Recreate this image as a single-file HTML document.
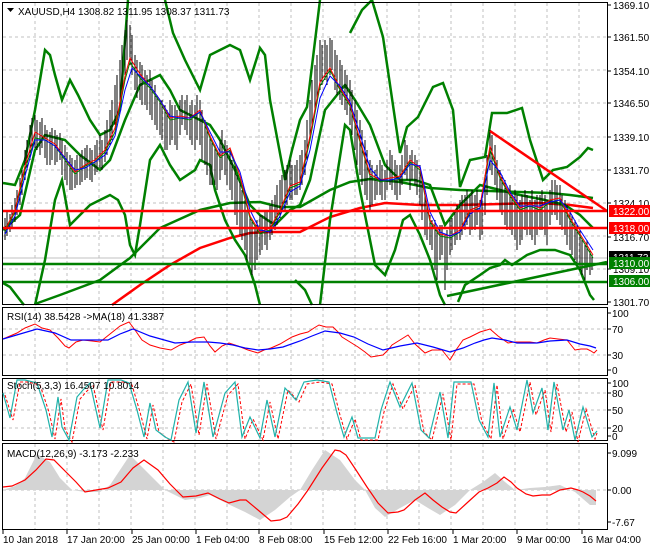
<!DOCTYPE html>
<html><head><meta charset="utf-8"><style>
html,body{margin:0;padding:0;background:#fff;width:650px;height:550px;overflow:hidden}
svg{display:block;font-family:"Liberation Sans",sans-serif;font-size:10px}
</style></head><body>
<svg width="650" height="550" viewBox="0 0 650 550" xmlns="http://www.w3.org/2000/svg">
<rect width="650" height="550" fill="#fff"/>
<g stroke="#c0c0c0" stroke-dasharray="3,3" stroke-width="1" fill="none">
<path d="M3 37H607M3 70H607M3 103H607M3 137H607M3 170H607M3 203H607M3 236H607M3 269H607"/>
<path d="M35 3V305M67 3V305M99 3V305M131 3V305M163 3V305M195 3V305M227 3V305M259 3V305M291 3V305M323 3V305M355 3V305M387 3V305M419 3V305M451 3V305M483 3V305M515 3V305M547 3V305M579 3V305"/>
<path d="M35 308V376M67 308V376M99 308V376M131 308V376M163 308V376M195 308V376M227 308V376M259 308V376M291 308V376M323 308V376M355 308V376M387 308V376M419 308V376M451 308V376M483 308V376M515 308V376M547 308V376M579 308V376"/>
<path d="M3 329H607M3 355H607"/>
<path d="M35 379V441M67 379V441M99 379V441M131 379V441M163 379V441M195 379V441M227 379V441M259 379V441M291 379V441M323 379V441M355 379V441M387 379V441M419 379V441M451 379V441M483 379V441M515 379V441M547 379V441M579 379V441"/>
<path d="M3 393H607M3 410H607M3 428H607"/>
<path d="M35 444V529M67 444V529M99 444V529M131 444V529M163 444V529M195 444V529M227 444V529M259 444V529M291 444V529M323 444V529M355 444V529M387 444V529M419 444V529M451 444V529M483 444V529M515 444V529M547 444V529M579 444V529"/>
<path d="M3 490H607"/>
</g>
<path d="M3 258H607" stroke="#c0c0c0"/>
<polyline fill="none" stroke="#f00" stroke-width="2.5" points="112,305 140,285 170,265 200,248 230,238 250,233 270,232 300,232 330,217 360,208 385,203 420,205 460,205 500,204 540,203 570,205 593,208"/>
<polyline fill="none" stroke="#008000" stroke-width="2.5" points="35,304 60,295 100,280 130,258 160,228 200,210 230,203 260,202 280,207 300,207 330,190 350,182 370,179 400,182 430,188 460,190 490,191 520,192 550,193 570,195 593,198"/>
<polyline fill="none" stroke="#008000" stroke-width="2.5" points="3,183 15,185 25,160 35,110 45,50 50,55 55,75 62,100 70,80 78,95 90,120 100,135 110,130 120,110 125,40 128,0"/>
<polyline fill="none" stroke="#008000" stroke-width="2.5" points="165,0 173,33 185,60 200,90 210,55 230,45 240,50 250,80 260,48 265,55 270,100 285,180 292,150 300,120 307,107 320,0"/>
<polyline fill="none" stroke="#008000" stroke-width="2.5" points="350,33 362,10 372,0"/>
<polyline fill="none" stroke="#008000" stroke-width="2.5" points="372,0 383,37 400,153 407,127 418,117 433,87 443,83 453,110 460,187 470,160 485,157 492,113 507,113 522,108 530,140 543,180 553,170 567,167 580,157 588,148 593,150"/>
<polyline fill="none" stroke="#008000" stroke-width="2.5" points="3,283 10,287 20,300 24,305"/>
<polyline fill="none" stroke="#008000" stroke-width="2.5" points="35,305 45,260 55,200 62,180 70,225 80,215 90,205 100,200 110,195 118,200 125,215 130,245 135,255 140,225 150,160 160,145 170,165 180,180 195,170 200,160 210,165 215,190 225,220 235,240 245,255 255,285 260,305"/>
<polyline fill="none" stroke="#008000" stroke-width="2.5" points="295,280 305,290 312,305"/>
<polyline fill="none" stroke="#008000" stroke-width="2.5" points="320,305 330,220 345,125 350,130 360,190 375,265 385,275 395,250 403,220 410,215 415,225 420,235 430,260 440,295 445,305"/>
<polyline fill="none" stroke="#008000" stroke-width="2.5" points="458,302 465,285 480,275 490,268 500,265 505,260 512,265 527,255 540,250 555,250 570,255 580,270 590,295 594,300"/>
<polyline fill="none" stroke="#008000" stroke-width="2.5" points="3,230 20,215 35,150 45,135 65,140 80,155 100,170 110,160 125,120 140,85 160,75 170,90 180,110 200,120 210,125 220,140 235,170 250,205 260,215 275,225 290,210 300,205 310,180 325,110 345,85 355,100 370,125 385,165 400,180 415,180 430,185 445,225 460,205 480,185 500,190 520,195 545,200 565,205 580,215 593,228"/>
<path stroke="#000" stroke-width="1" fill="none" d="M5 218V240M7 212V236M10 214V232M12 205V228M15 198V222M17 190V215M20 178V205M22 170V195M25 150V180M27 140V170M30 125V160M32 118V150M35 115V148M37 120V150M40 122V155M42 118V148M45 125V158M47 130V165M50 132V165M52 128V160M55 130V165M57 135V162M60 133V160M62 140V175M65 145V180M67 152V185M70 155V190M72 158V190M75 160V188M77 155V185M80 155V185M82 150V182M85 148V180M87 145V178M90 148V180M92 150V182M95 145V175M97 140V172M100 135V168M102 140V170M105 130V162M107 120V155M110 110V145M112 100V140M115 85V125M117 75V115M120 60V100M122 45V90M125 30V75M127 20V60M130 25V65M132 35V75M135 55V90M137 60V98M140 62V100M142 65V105M145 70V105M147 75V110M150 70V115M152 80V120M155 85V125M157 95V130M160 100V135M162 100V140M165 105V150M167 110V150M170 100V145M172 105V140M175 105V145M177 110V150M180 100V135M182 95V125M185 100V130M187 95V135M190 105V140M192 100V145M195 105V150M197 95V140M200 100V145M202 110V160M205 120V165M207 130V175M210 135V185M212 140V185M215 145V185M217 150V190M220 140V180M222 130V170M225 140V175M227 145V185M230 150V190M232 160V200M235 165V215M237 175V225M240 180V235M242 190V240M245 200V250M247 210V260M250 215V265M252 220V275M255 225V270M257 220V260M260 215V255M262 215V250M265 210V245M267 212V250M270 205V240M272 200V235M275 195V230M277 185V225M280 180V218M282 175V210M285 170V210M287 165V205M290 160V200M292 165V200M295 165V195M297 160V195M300 155V190M302 150V185M305 140V175M307 120V160M310 100V140M312 80V125M315 65V110M317 55V100M320 40V90M322 45V85M325 40V80M327 45V85M330 38V75M332 40V70M335 50V90M337 55V95M340 60V100M342 65V105M345 70V110M347 75V115M350 80V125M352 90V135M355 100V150M357 110V165M360 120V175M362 130V185M365 140V195M367 150V200M370 160V210M372 165V205M375 170V200M377 165V195M380 160V195M382 165V200M385 170V200M387 160V190M390 150V185M392 155V190M395 160V195M397 165V200M400 165V195M402 155V185M405 140V175M407 145V180M410 155V190M412 150V180M415 155V185M417 160V195M420 165V205M422 175V220M425 195V235M427 205V240M430 215V245M432 220V250M435 220V270M437 225V280M440 225V260M442 225V255M445 235V290M447 230V270M450 220V255M452 218V250M455 210V245M457 205V240M460 200V240M462 195V235M465 195V230M467 190V225M470 195V235M472 190V230M475 195V230M477 190V225M480 200V240M482 195V235M485 175V215M487 155V195M490 130V170M492 135V175M495 145V185M497 160V200M500 170V210M502 175V215M505 180V225M507 190V230M510 185V230M512 195V235M515 190V240M517 195V250M520 200V245M522 195V240M525 190V230M527 195V235M530 200V235M532 190V240M535 200V245M537 195V235M540 195V230M542 190V230M545 195V235M547 200V245M550 190V225M552 180V215M555 180V215M557 185V220M560 185V225M562 195V230M565 200V235M567 205V245M570 210V250M572 215V255M575 220V260M577 225V265M580 230V270M582 240V275M585 245V280M587 240V270M590 250V275M592 255V270"/>
<polyline fill="none" stroke="#008000" stroke-width="1" points="5,232 15,212 25,170 35,138 45,140 55,146 65,160 75,174 85,166 95,162 105,152 115,132 125,80 130,62 140,78 150,88 160,102 170,120 180,118 190,120 200,112 210,138 220,158 230,150 240,180 250,218 260,234 270,230 280,212 290,188 300,184 310,140 320,86 330,70 340,90 350,106 360,142 370,176 380,182 390,180 400,178 410,162 420,170 430,222 440,236 450,238 460,232 470,212 480,208 490,150 500,178 510,196 520,210 530,206 540,210 550,202 560,200 570,220 580,236 593,258"/>
<polyline fill="none" stroke="#f00" stroke-width="1" points="5,230 15,210 25,166 35,132 45,138 55,144 65,158 75,172 85,165 95,160 105,150 115,128 125,76 130,58 140,74 150,86 160,100 170,118 180,116 190,118 200,110 210,136 220,156 230,148 240,176 250,216 260,232 270,228 280,210 290,186 300,182 310,136 320,82 330,68 340,88 350,104 360,140 370,174 380,180 390,178 400,176 410,160 420,168 430,220 440,234 450,236 460,230 470,210 480,206 490,146 500,176 510,194 520,208 530,204 540,208 550,200 560,198 570,218 580,234 593,255"/>
<polyline fill="none" stroke="#00f" stroke-width="1" points="5,234 15,216 25,176 35,140 45,140 55,146 65,158 75,170 85,168 95,162 105,155 115,136 125,90 132,68 140,76 150,86 160,100 170,116 180,118 190,118 200,112 210,132 220,152 230,152 240,172 250,210 260,230 270,232 280,216 290,192 300,186 310,150 320,98 330,76 340,86 350,102 360,134 370,168 380,180 390,180 400,178 410,164 420,166 430,212 440,232 450,236 460,232 470,214 480,208 490,160 500,172 510,192 520,206 530,206 540,206 550,202 560,200 570,212 580,230 593,250"/>
<path d="M490 131L607 211" stroke="#f00" stroke-width="2.5"/>
<path d="M447 296L607 262" stroke="#008000" stroke-width="2.5"/>
<path d="M3 211H607M3 228H607" stroke="#f00" stroke-width="2.5"/>
<path d="M3 264H607M3 282H607" stroke="#008000" stroke-width="2.5"/>
<g fill="none" stroke="#000" stroke-width="1">
<rect x="2.5" y="2.5" width="605" height="302"/>
<rect x="2.5" y="307.5" width="605" height="68"/>
<rect x="2.5" y="378.5" width="605" height="62"/>
<rect x="2.5" y="443.5" width="605" height="86"/>
</g>
<g stroke="#000"><path d="M607 5h4M607 37h4M607 71h4M607 103h4M607 137h4M607 170h4M607 203h4M607 237h4M607 269h4M607 302h4M607 313h4M607 329h4M607 355h4M607 370h4M607 383h4M607 393h4M607 410h4M607 428h4M607 436h4M607 453h4M607 490h4M607 522h4M3 530v4M67 530v4M132 530v4M196 530v4M259 530v4M324 530v4M388 530v4M453 530v4M517 530v4M582 530v4"/></g>
<g fill="#000">
<text x="613" y="9">1369.10</text><text x="613" y="41">1361.50</text><text x="613" y="75">1354.10</text><text x="613" y="107">1346.50</text><text x="613" y="141">1339.10</text><text x="613" y="174">1331.70</text><text x="613" y="207">1324.10</text><text x="613" y="241">1316.70</text><text x="613" y="273">1309.10</text><text x="613" y="306">1301.70</text>
</g>
<rect x="609" y="205" width="41" height="12" fill="#f00"/><text x="613" y="215" fill="#fff">1322.00</text>
<rect x="609" y="222" width="41" height="12" fill="#f00"/><text x="613" y="232" fill="#fff">1318.00</text>
<rect x="609" y="251" width="41" height="12" fill="#000"/><text x="613" y="261" fill="#fff">1311.73</text>
<rect x="609" y="257" width="41" height="12" fill="#008000"/><text x="613" y="267" fill="#fff">1310.00</text>
<rect x="609" y="275" width="41" height="12" fill="#008000"/><text x="613" y="285" fill="#fff">1306.00</text>
<g fill="#000">
<text x="612" y="317">100</text><text x="612" y="333">70</text><text x="612" y="359">30</text><text x="612" y="374">0</text>
<text x="612" y="387">100</text><text x="612" y="397">80</text><text x="612" y="414">50</text><text x="612" y="432">20</text><text x="612" y="440">0</text>
<text x="612" y="457">9.099</text><text x="612" y="494">0.00</text><text x="612" y="526">-7.67</text>
</g>
<polyline fill="none" stroke="#f00" stroke-width="1" points="3,339 10,336 17,333 25,328 35,324 42,328 50,330 58,338 65,346 69,348 76,342 83,340 92,341 100,342 110,334 120,326 129,322 135,330 142,340 150,345 160,348 171,350 180,345 188,342 196,338 204,337 210,346 215,352 222,346 229,343 238,346 248,350 258,353 264,350 271,348 280,344 292,337 300,334 308,332 314,328 319,325 326,327 333,327 338,332 342,337 350,342 358,347 365,352 371,357 377,356 383,355 388,350 392,345 400,340 408,335 415,344 425,353 432,350 442,350 446,355 450,360 456,350 463,340 470,337 480,332 490,329 498,336 508,343 514,342 521,342 530,342 537,343 544,340 550,338 558,339 567,340 571,345 575,350 581,349 587,349 591,351 594,353 597,350"/>
<polyline fill="none" stroke="#00f" stroke-width="1.2" points="3,339 20,334 37,329 55,333 71,340 90,340 108,340 120,334 133,329 150,336 175,343 192,342 208,342 220,343 233,345 245,348 258,350 270,349 283,347 300,341 312,336 325,331 340,333 354,337 368,344 383,350 400,346 417,343 433,347 450,352 463,348 475,343 484,340 492,338 505,340 517,343 527,343 537,343 550,341 567,340 580,344 590,346 596,348"/>
<text x="7" y="320" fill="#000">RSI(14) 38.5428  -&gt;MA(18) 41.3387</text>
<polyline fill="none" stroke="#f00" stroke-width="1" stroke-dasharray="3,2" transform="translate(3,2)" points="2,393 10,418 17,380 25,380 37,383 46,410 52,437 58,397 62,427 69,440 77,397 83,390 90,383 100,428 108,380 121,380 129,383 137,410 144,437 150,403 156,430 165,437 171,440 179,400 188,382 196,433 204,382 213,437 225,393 235,382 242,437 250,417 260,438 267,400 275,437 285,388 296,400 304,382 317,380 329,382 337,413 344,437 352,417 358,438 375,438 381,410 390,382 400,407 412,383 421,430 429,438 440,392 448,438 454,382 471,382 479,420 488,437 494,383 500,437 510,407 517,430 527,380 533,413 542,388 548,430 554,382 563,430 569,410 575,440 583,407 592,437 594,431"/>
<polyline fill="none" stroke="#20b2aa" stroke-width="1.2" points="3,393 10,418 17,380 25,380 37,383 46,410 52,437 58,397 62,427 69,440 77,397 83,390 90,383 100,428 108,380 121,380 129,383 137,410 144,437 150,403 156,430 165,437 171,440 179,400 188,382 196,433 204,382 213,437 225,393 235,382 242,437 250,417 260,438 267,400 275,437 285,388 296,400 304,382 317,380 329,382 337,413 344,437 352,417 358,438 375,438 381,410 390,382 400,407 412,383 421,430 429,438 440,392 448,438 454,382 471,382 479,420 488,437 494,383 500,437 510,407 517,430 527,380 533,413 542,388 548,430 554,382 563,430 569,410 575,440 583,407 592,437 597,431"/>
<text x="7" y="389" fill="#000">Stoch(5,3,3) 16.4507 10.8014</text>
<polygon fill="#d4d4d4" points="3,490 15,486 25,478 37,454 50,462 60,478 72,490 85,492 100,492 110,485 120,470 130,455 145,470 165,490 185,500 200,498 210,495 230,505 245,512 260,520 275,510 290,497 300,490 312,470 325,450 340,460 355,480 365,490 375,508 385,517 400,508 415,500 428,508 440,515 455,505 470,490 483,482 495,473 505,482 515,490 530,488 545,487 560,485 575,492 590,505 596,505 596,490"/>
<polyline fill="none" stroke="#f00" stroke-width="1.2" points="3,487 12,486 25,480 36,470 46,459 54,460 67,473 76,482 85,492 96,490 108,488 121,482 133,468 144,460 158,470 170,484 183,497 196,496 208,493 220,499 229,503 240,500 246,500 258,510 271,521 280,520 287,517 298,504 308,490 322,468 335,450 340,451 346,455 356,470 367,487 378,503 388,513 398,512 404,510 415,500 425,493 433,500 442,507 450,512 456,513 468,502 479,492 488,488 497,483 504,477 511,482 517,488 526,494 533,496 542,495 550,495 560,490 571,488 578,490 583,492 590,496 596,501"/>
<text x="7" y="457" fill="#000">MACD(12,26,9) -3.173 -2.233</text>
<g fill="#000">
<text x="3" y="543">10 Jan 2018</text><text x="67" y="543">17 Jan 20:00</text><text x="132" y="543">25 Jan 00:00</text><text x="196" y="543">1 Feb 04:00</text><text x="259" y="543">8 Feb 08:00</text><text x="324" y="543">15 Feb 12:00</text><text x="388" y="543">22 Feb 16:00</text><text x="453" y="543">1 Mar 20:00</text><text x="517" y="543">9 Mar 00:00</text><text x="582" y="543">16 Mar 04:00</text>
</g>
<path d="M7 8h7l-3.5 4z" fill="#000"/>
<text x="18" y="15" fill="#000">XAUUSD,H4  1308.82 1311.95 1308.37 1311.73</text>
</svg>
</body></html>
